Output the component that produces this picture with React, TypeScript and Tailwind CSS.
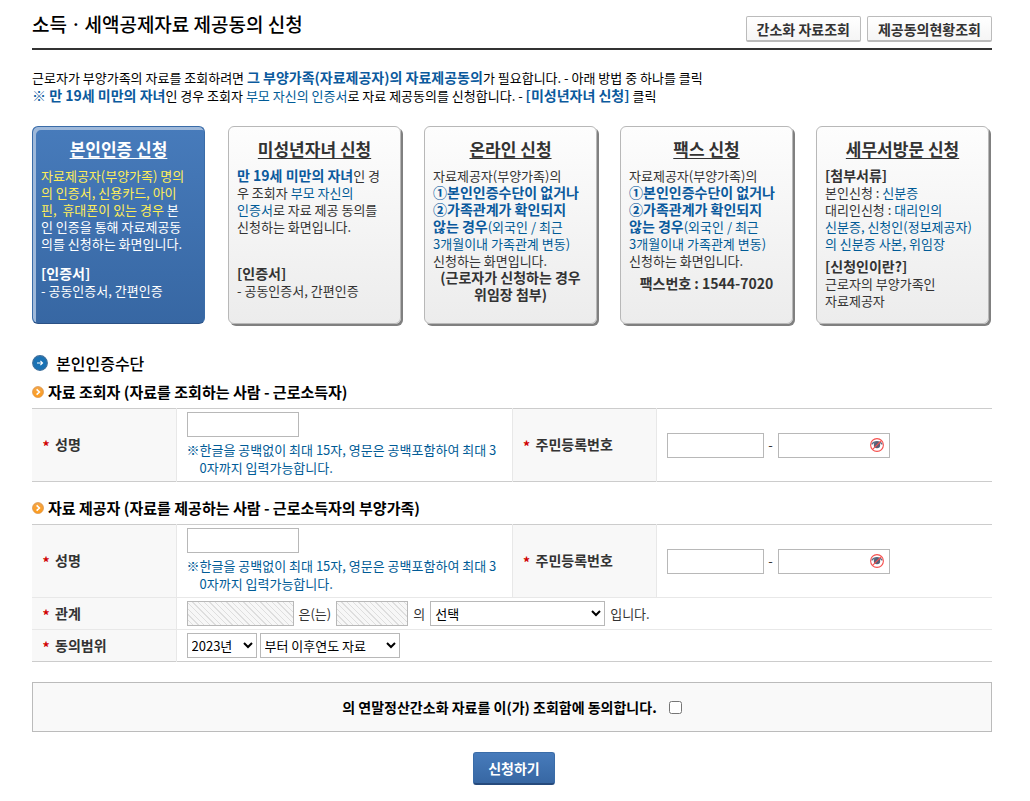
import { useState } from "react";
import type { ReactNode } from "react";

/* Blue highlighted text */
function Blue({ children }: { children: ReactNode }) {
  return <span className="text-[#005b96]">{children}</span>;
}

function BlueBold({ children }: { children: ReactNode }) {
  return <strong className="text-sm/[17px] font-bold text-[#0b5a9d]">{children}</strong>;
}

function Label({ children }: { children: ReactNode }) {
  return <strong className="text-sm/[17px] font-bold">{children}</strong>;
}

type CardProps = {
  title: string;
  active?: boolean;
  onSelect: () => void;
  children: ReactNode;
};

function MethodCard({ title, active, onSelect, children }: CardProps) {
  return (
    <article
      className={
        active
          ? "min-h-[198px] rounded-md border border-[#3a6ca8] border-b-[#2b5185] bg-linear-to-b from-[#477bbb] to-[#3767a3] px-2 pt-[10px] text-white shadow-[inset_3px_3px_0_#9fb9da]"
          : "min-h-[198px] rounded-md border border-[#b8b8b8] bg-linear-to-b from-[#fdfdfd] to-[#ececec] px-2 pt-[10px] text-[#333] shadow-[2px_2px_0_#808080]"
      }
    >
      <h2 className="mb-[6px] text-center">
        <button
          type="button"
          onClick={onSelect}
          className="cursor-pointer text-[17px]/6 font-bold underline decoration-1 underline-offset-2"
        >
          {title}
        </button>
      </h2>
      <div className="text-[13px]/[17px] whitespace-nowrap">{children}</div>
    </article>
  );
}

function OrangeBullet() {
  return (
    <svg width="12" height="12" viewBox="0 0 12 12" className="shrink-0" aria-hidden="true">
      <defs>
        <linearGradient id="orange" x1="0" y1="0" x2="0" y2="1">
          <stop offset="0" stopColor="#f2a549" />
          <stop offset="1" stopColor="#ff9c1a" />
        </linearGradient>
      </defs>
      <circle cx="6" cy="6" r="5.5" fill="url(#orange)" stroke="#d9924a" strokeWidth="0.7" />
      <path d="M4.6 3.3 7.4 6 4.6 8.7" fill="none" stroke="#fff" strokeWidth="1.6" />
    </svg>
  );
}

function BlueBullet() {
  return (
    <svg width="16" height="16" viewBox="0 0 16 16" className="shrink-0" aria-hidden="true">
      <circle cx="8" cy="8" r="7.3" fill="#1a72b4" stroke="#3d6f9c" strokeWidth="1.2" />
      <path d="M5 8H10.4M8.4 5.8 10.6 8 8.4 10.2" fill="none" stroke="#fff" strokeWidth="1.1" />
    </svg>
  );
}

function EyeOffIcon() {
  return (
    <svg width="14" height="14" viewBox="0 0 14 14" aria-hidden="true">
      <path d="M1.6 6.4C4 2.6 10 2.6 12.4 6.4" fill="none" stroke="#5d6b82" strokeWidth="1.2" />
      <circle cx="7" cy="7" r="3.2" fill="#56637a" />
      <circle cx="7" cy="7" r="6.4" fill="none" stroke="#f5504e" strokeWidth="1.1" />
      <path d="M2.6 11.4 11.4 2.6" stroke="#f5504e" strokeWidth="1.2" />
    </svg>
  );
}

function HeaderCell({ htmlFor, children }: { htmlFor: string; children: ReactNode }) {
  return (
    <th
      scope="row"
      className="border-x border-[#e8e8e8] bg-[#f8f8f8] pb-[2px] pl-[10px] text-left align-middle first:border-l-0"
    >
      <label htmlFor={htmlFor} className="flex items-center gap-[5px] text-sm/[18px] font-bold text-[#333]">
        <span className="w-2 pt-1 text-center text-[#d00000]">*</span>
        {children}
      </label>
    </th>
  );
}

const inputClass = "h-[25px] border border-[#b8b8b8] bg-white px-1 text-[13px]";
const disabledClass =
  "h-[25px] border border-[#b8b8b8] bg-[repeating-linear-gradient(45deg,#f7f7f7_0,#f7f7f7_3px,#dedede_3px,#dedede_4px)]";
const selectClass = "h-[25px] border border-[#b8b8b8] bg-white text-[13px] text-black";

function PersonRow({ id }: { id: string }) {
  const [hidden, setHidden] = useState(true);

  return (
    <tr className="h-[73px]">
      <HeaderCell htmlFor={`${id}-name`}>성명</HeaderCell>
      <td className="pt-[3px] pl-[10px] align-top">
        <input id={`${id}-name`} type="text" className={`${inputClass} block w-28`} />
        <p className="mt-1 flex text-[13px]/[18px] whitespace-nowrap text-[#005b96]">
          <span className="w-[13px] shrink-0">※</span>
          <span>
            한글을 공백없이 최대 15자, 영문은 공백포함하여 최대 3<br />
            0자까지 입력가능합니다.
          </span>
        </p>
      </td>
      <HeaderCell htmlFor={`${id}-rrn`}>주민등록번호</HeaderCell>
      <td className="pl-[10px] align-middle">
        <div className="flex items-center gap-1">
          <input id={`${id}-rrn`} type="text" maxLength={6} className={`${inputClass} w-[97px]`} />
          <span className="w-[6px] text-center">-</span>
          <div className="flex h-[25px] w-28 items-center border border-[#b8b8b8] bg-white pr-[5px]">
            <input
              type={hidden ? "password" : "text"}
              maxLength={7}
              aria-label="주민등록번호 뒷자리"
              className="h-full min-w-0 flex-1 px-1 text-[13px] outline-none"
            />
            <button type="button" aria-label="표시" onClick={() => setHidden(!hidden)}>
              <EyeOffIcon />
            </button>
          </div>
        </div>
      </td>
    </tr>
  );
}

function Columns() {
  return (
    <colgroup>
      <col className="w-[15%]" />
      <col className="w-[35%]" />
      <col className="w-[15%]" />
      <col className="w-[35%]" />
    </colgroup>
  );
}

const methods = ["본인인증 신청", "미성년자녀 신청", "온라인 신청", "팩스 신청", "세무서방문 신청"];

export default function App() {
  const [selected, setSelected] = useState(0);

  const bodies: ReactNode[] = [
    <>
      <span className="text-[#ffee58]">
        자료제공자(부양가족) 명의
        <br />
        의 인증서, 신용카드, 아이
        <br />
        핀, &nbsp;휴대폰이 있는 경우
      </span>{" "}
      본<br />
      인 인증을 통해 자료제공동
      <br />
      의를 신청하는 화면입니다.
      <p className="mt-[13px]">
        <Label>[인증서]</Label>
        <br />- 공동인증서, 간편인증
      </p>
    </>,
    <>
      <BlueBold>만 19세 미만의 자녀</BlueBold>인 경<br />우 조회자 <Blue>부모 자신의</Blue>
      <br />
      <Blue>인증서</Blue>로 자료 제공 동의를
      <br />
      신청하는 화면입니다.
      <p className="mt-[30px]">
        <Label>[인증서]</Label>
        <br />- 공동인증서, 간편인증
      </p>
    </>,
    <>
      자료제공자(부양가족)의
      <br />
      <BlueBold>
        ①본인인증수단이 없거나
        <br />
        ②가족관계가 확인되지
        <br />
        않는 경우
      </BlueBold>
      <Blue>
        (외국인 / 최근
        <br />
        3개월이내 가족관계 변동)
      </Blue>
      <br />
      신청하는 화면입니다.
      <p className="text-center">
        <Label>
          (근로자가 신청하는 경우
          <br />
          위임장 첨부)
        </Label>
      </p>
    </>,
    <>
      자료제공자(부양가족)의
      <br />
      <BlueBold>
        ①본인인증수단이 없거나
        <br />
        ②가족관계가 확인되지
        <br />
        않는 경우
      </BlueBold>
      <Blue>
        (외국인 / 최근
        <br />
        3개월이내 가족관계 변동)
      </Blue>
      <br />
      신청하는 화면입니다.
      <p className="mt-[6px] text-center">
        <Label>팩스번호 : 1544-7020</Label>
      </p>
    </>,
    <>
      <Label>[첨부서류]</Label>
      <br />
      본인신청 : <Blue>신분증</Blue>
      <br />
      대리인신청 :{" "}
      <Blue>
        대리인의
        <br />
        신분증, 신청인(정보제공자)
        <br />의 신분증 사본, 위임장
      </Blue>
      <p className="mt-[6px]">
        <Label>[신청인이란?]</Label>
        <br />
        근로자의 부양가족인
        <br />
        자료제공자
      </p>
    </>,
  ];

  return (
    <main className="min-h-screen bg-white pr-[38px] pb-4 pl-8 font-['Noto_Sans_CJK_KR',sans-serif] text-[13px]/[18px] text-[#333]">
      {/* Page title */}
      <header className="flex h-[50px] items-center justify-between border-b-2 border-[#333]">
        <h1 className="text-[19px]/7 font-medium whitespace-nowrap text-black">소득ㆍ세액공제자료 제공동의 신청</h1>
        <div className="flex gap-[6px] pt-[10px]">
          {["간소화 자료조회", "제공동의현황조회"].map((text) => (
            <button
              key={text}
              type="button"
              className="h-[26px] rounded-xs border border-b-2 border-[#bbb] bg-linear-to-b from-white to-[#f5f5f5] px-[10px] text-sm/[22px] font-bold whitespace-nowrap"
            >
              {text}
            </button>
          ))}
        </div>
      </header>

      {/* Guide */}
      <p className="mt-[19px] text-black">
        근로자가 부양가족의 자료를 조회하려면 <BlueBold>그 부양가족(자료제공자)의 자료제공동의</BlueBold>가 필요합니다. -
        아래 방법 중 하나를 클릭
        <br />
        <BlueBold>※ 만 19세 미만의 자녀</BlueBold>인 경우 조회자 <Blue>부모 자신의 인증서</Blue>로 자료 제공동의를
        신청합니다. - <BlueBold>[미성년자녀 신청]</BlueBold> 클릭
      </p>

      {/* Method cards */}
      <section className="mt-[21px] mr-[3px] grid grid-cols-5 gap-[23px]">
        {methods.map((title, i) => (
          <MethodCard key={title} title={title} active={i === selected} onSelect={() => setSelected(i)}>
            {bodies[i]}
          </MethodCard>
        ))}
      </section>

      <h2 className="mt-[27px] flex items-center gap-2 text-base/6 font-medium text-black">
        <BlueBullet />
        본인인증수단
      </h2>

      <form onSubmit={(e) => e.preventDefault()}>
        <h3 className="mt-[7px] mb-[6px] flex items-center gap-1 text-[15px]/5 font-bold text-black">
          <OrangeBullet />
          자료 조회자 (자료를 조회하는 사람 - 근로소득자)
        </h3>
        <table className="w-full table-fixed border-collapse border-y border-[#ccc]">
          <Columns />
          <tbody>
            <PersonRow id="viewer" />
          </tbody>
        </table>

        <h3 className="mt-4 mb-[6px] flex items-center gap-1 text-[15px]/5 font-bold text-black">
          <OrangeBullet />
          자료 제공자 (자료를 제공하는 사람 - 근로소득자의 부양가족)
        </h3>
        <table className="w-full table-fixed border-collapse border-y border-[#ccc]">
          <Columns />
          <tbody className="divide-y divide-[#e8e8e8]">
            <PersonRow id="provider" />
            <tr className="h-8">
              <HeaderCell htmlFor="relation">관계</HeaderCell>
              <td colSpan={3} className="pl-[10px]">
                <div className="flex items-center gap-[5px]">
                  <input disabled aria-label="제공자 성명" className={`${disabledClass} w-[107px]`} />
                  <span className="whitespace-nowrap">은(는)</span>
                  <input disabled aria-label="조회자 성명" className={`${disabledClass} w-[72px]`} />
                  <span>의</span>
                  <select id="relation" className={`${selectClass} w-[175px]`}>
                    <option>선택</option>
                  </select>
                  <span>입니다.</span>
                </div>
              </td>
            </tr>
            <tr className="h-8">
              <HeaderCell htmlFor="year">동의범위</HeaderCell>
              <td colSpan={3} className="pl-[10px]">
                <div className="flex items-center gap-[3px]">
                  <select id="year" className={`${selectClass} w-[70px]`}>
                    <option>2023년</option>
                  </select>
                  <select aria-label="동의 기간" className={`${selectClass} w-[140px]`}>
                    <option>부터 이후연도 자료</option>
                  </select>
                </div>
              </td>
            </tr>
          </tbody>
        </table>

        {/* Consent */}
        <label className="mt-5 flex h-[50px] items-center justify-center gap-3 border border-[#bbb] bg-[#f9f9f9] text-sm font-bold text-black">
          의 연말정산간소화 자료를 이(가) 조회함에 동의합니다.
          <input type="checkbox" className="size-[13px]" />
        </label>

        <div className="mt-5 flex justify-center pl-1">
          <button
            type="submit"
            className="h-[33px] rounded-[3px] border border-[#3a6ca8] border-b-2 border-b-[#264a7c] bg-linear-to-b from-[#477bbb] to-[#3767a3] px-[14px] text-sm font-bold text-white"
          >
            신청하기
          </button>
        </div>
      </form>
    </main>
  );
}
